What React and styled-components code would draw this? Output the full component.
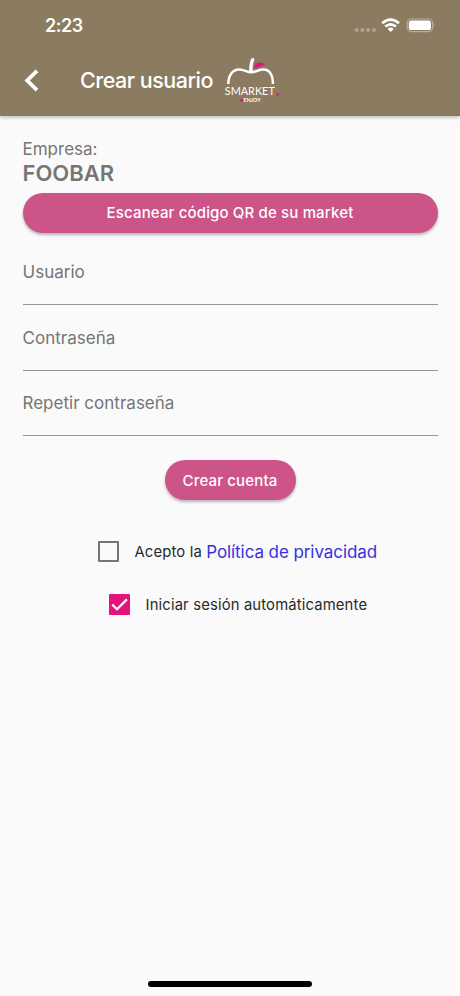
import { useState } from "react";

import styled, { createGlobalStyle } from "styled-components";

const GlobalStyle = createGlobalStyle`
  * {
    box-sizing: border-box;
  }

  body {
    margin: 0;
    background: #fafafa;
    font-family: Inter, sans-serif;
  }
`

const Container = styled.div`
  width: 100%;
  height: 996px;
  display: flex;
  flex-direction: column;
  background: #fafafa;
  overflow: hidden;
`

const Header = styled.header`
  height: 116px;
  flex-shrink: 0;
  background: #8b7b60;
  box-shadow: 0 1px 4px rgba(0, 0, 0, 0.3);
`

const StatusBar = styled.div`
  height: 51px;
  padding: 0 24px 0 45px;
  display: flex;
  align-items: center;
  justify-content: space-between;
`

const Hora = styled.span`
  color: #fff;
  font-size: 18px;
  font-weight: 600;
  letter-spacing: -0.45px;
`

const NavBar = styled.div`
  height: 65px;
  padding-left: 22px;
  display: flex;
  align-items: flex-start;
`

const BackButton = styled.button`
  width: 20px;
  height: 28px;
  margin: 15px 38px 0 0;
  padding: 0;
  border: none;
  background: none;
`

const Titulo = styled.h1`
  width: 142px;
  margin: 15px 0 0;
  color: #fff;
  font-size: 21.5px;
  font-weight: 500;
  line-height: 28px;
  letter-spacing: -0.5px;
  white-space: nowrap;
`

const Content = styled.main`
  flex: 1;
  padding: 23px 22.5px 0 22.5px;
  display: flex;
  flex-direction: column;
  align-items: center;
`

const Empresa = styled.div`
  align-self: stretch;
  height: 53.5px;
  color: #757575;
  font-size: 17px;
  line-height: 21px;
  letter-spacing: 0;

  strong {
    display: block;
    font-size: 22px;
    font-weight: 600;
    line-height: 26px;
    letter-spacing: 0;
  }
`

const Button = styled.button`
  width: ${(props) => props.$width};
  height: 40px;
  flex-shrink: 0;
  padding: 0;
  border: none;
  border-radius: 20px;
  background: #cd5488;
  box-shadow: 0 2px 3px rgba(0, 0, 0, 0.28);
  color: #fff;
  font-family: inherit;
  font-size: 15px;
  font-weight: 500;
  letter-spacing: 0.15px;
`

const Campos = styled.div`
  align-self: stretch;
  margin: 7px 0 24px;
`

const Campo = styled.label`
  height: 65.6px;
  padding-top: 22.5px;
  display: block;
  border-bottom: 1.4px solid #969696;
  color: #757575;
  font-size: 17px;
  line-height: 21px;
  letter-spacing: 0.01px;
`

const Opciones = styled.div`
  align-self: stretch;
  margin-top: 41px;
  display: flex;
  flex-direction: column;
  gap: 32px;
`

const Opcion = styled.div`
  height: 21px;
  padding-left: ${(props) => props.$left};
  display: flex;
  align-items: center;
  color: #292929;
  font-size: 14.8px;
  letter-spacing: 0.16px;
  white-space: pre;
`

const Check = styled.button`
  width: 21px;
  height: 21px;
  margin-right: 16px;
  padding: 0;
  display: flex;
  flex-shrink: 0;
  border: ${(props) => (props.$checked ? "none" : "2px solid #757575")};
  border-radius: 1px;
  background: ${(props) => (props.$checked ? "#e4127d" : "transparent")};
`

const Enlace = styled.a`
  color: #3730df;
  font-size: 17px;
  letter-spacing: -0.08px;
`

const HomeBar = styled.div`
  width: 164px;
  height: 6px;
  margin: 0 auto 9px;
  flex-shrink: 0;
  border-radius: 3px;
  background: #000;
`

const StatusIcons = () => (
  <svg width="82" height="18" viewBox="0 0 82 18">
    <g fill="#b0a48d">
      <circle cx="2.6" cy="13" r="2" />
      <circle cx="8.4" cy="13" r="2" />
      <circle cx="14.2" cy="13" r="2" />
      <circle cx="20" cy="13" r="2" />
    </g>
    <g fill="none" stroke="#fff" strokeWidth="2.7">
      <path d="M28.2 6.3Q36.6 -0.9 45 6.3" />
      <path d="M31.3 9.6Q36.6 5 41.9 9.6" />
    </g>
    <path d="M33.6 12Q36.6 9.2 39.6 12L36.6 14.9Z" fill="#fff" />
    <rect x="53.2" y="2" width="25.4" height="12.6" rx="4" fill="none" stroke="#b9ad98" strokeWidth="1.2" />
    <rect x="54.8" y="3.5" width="22.2" height="9.6" rx="2.6" fill="#fff" />
    <path d="M79.8 6.2Q81.6 8.3 79.8 10.4Z" fill="#b9ad98" />
  </svg>
)

const Logo = () => (
  <svg width="62" height="58" viewBox="0 0 62 58">
    <path
      d="M6.4 33C5.8 25 10.5 18.6 17 18.6C22.5 18.6 25 21.2 29 21.2C33.5 21.2 36.5 18.6 41.5 18.6C48 18.6 51.4 25 50.8 33"
      fill="none"
      stroke="#fff"
      strokeWidth="2.5"
    />
    <path d="M29 20.5C28.7 15.5 29 12 30.7 8.8" fill="none" stroke="#fff" strokeWidth="3.4" strokeLinecap="round" />
    <path d="M31.8 17.4C32.8 11.2 37.5 9.8 43.4 13.8C40 14 36.5 16.8 31.8 17.4Z" fill="#e4127d" />
    <text x="2.8" y="43.8" textLength="50" lengthAdjust="spacingAndGlyphs" fill="#fff" fontFamily="Lato, sans-serif" fontSize="11.6">
      SMARKET
    </text>
    <circle cx="55.8" cy="43.4" r="1.3" fill="#e4127d" />
    <circle cx="19.6" cy="49.2" r="1.5" fill="#e4127d" />
    <text x="21.6" y="51" textLength="17" lengthAdjust="spacingAndGlyphs" fill="#fff" fontFamily="Lato, sans-serif" fontSize="5" fontWeight="700">
      ENJOY
    </text>
  </svg>
)

const App = () => {

  const [acepto, setAcepto] = useState(false)
  const [autoLogin, setAutoLogin] = useState(true)

  const marca = (
    <svg width="21" height="21" viewBox="0 0 21 21">
      <path d="M3.2 10.6L8 15.3L17.9 5.4" fill="none" stroke="#fff" strokeWidth="2.2" />
    </svg>
  )

  return (
    <Container>
      <GlobalStyle />
      <Header>
        <StatusBar>
          <Hora>2:23</Hora>
          <StatusIcons />
        </StatusBar>
        <NavBar>
          <BackButton aria-label="Volver">
            <svg width="20" height="28" viewBox="0 0 20 28">
              <path d="M15 4.8L5.2 14.5L15 24.2" fill="none" stroke="#fff" strokeWidth="3.8" />
            </svg>
          </BackButton>
          <Titulo>Crear usuario</Titulo>
          <Logo />
        </NavBar>
      </Header>
      <Content>
        <Empresa>
          Empresa:
          <strong>FOOBAR</strong>
        </Empresa>
        <Button $width="100%">Escanear código QR de su market</Button>
        <Campos>
          <Campo>Usuario</Campo>
          <Campo>Contraseña</Campo>
          <Campo>Repetir contraseña</Campo>
        </Campos>
        <Button $width="131px">Crear cuenta</Button>
        <Opciones>
          <Opcion $left="75px">
            <Check $checked={acepto} aria-label="Acepto" onClick={() => setAcepto(!acepto)}>
              {acepto && marca}
            </Check>
            Acepto la <Enlace>Política de privacidad</Enlace>
          </Opcion>
          <Opcion $left="86px">
            <Check $checked={autoLogin} aria-label="Iniciar sesión" onClick={() => setAutoLogin(!autoLogin)}>
              {autoLogin && marca}
            </Check>
            Iniciar sesión automáticamente
          </Opcion>
        </Opciones>
      </Content>
      <HomeBar />
    </Container>
  )
}

export default App
